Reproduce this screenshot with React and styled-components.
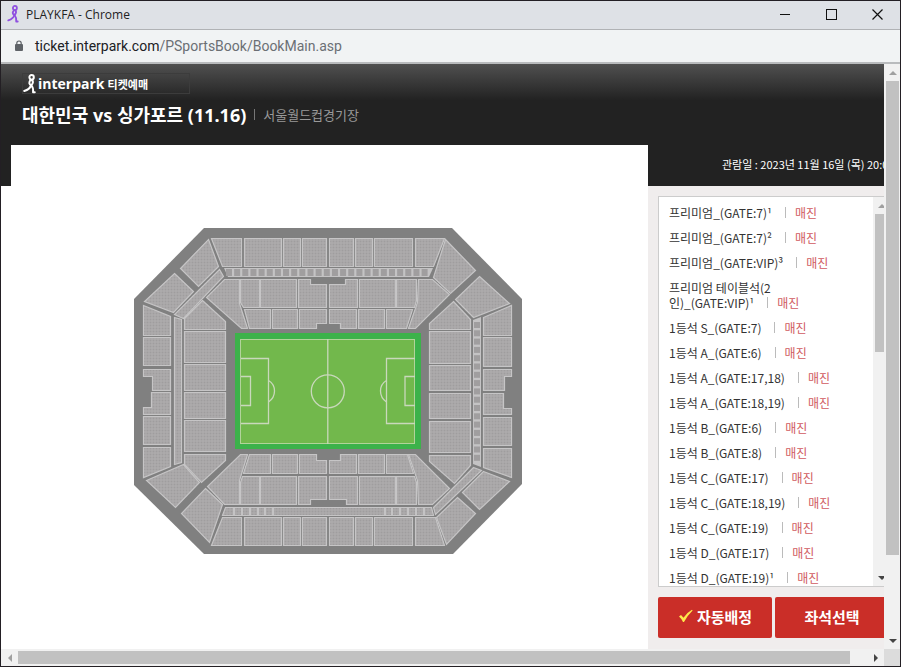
import React from 'react';
import styled, { createGlobalStyle } from 'styled-components';

const GlobalStyle = createGlobalStyle`
  * {
    box-sizing: border-box;
  }

  body {
    margin: 0;
    font-family: 'Noto Sans CJK KR', 'Noto Sans', sans-serif;
    font-size: 12px;
    color: #333;
  }
`;

const Window = styled.div`
  display: flex;
  flex-direction: column;
  height: 100vh;
  min-height: 480px;
  border: 1px solid #231f24;
  background: #fff;
`;

const TitleBar = styled.header`
  display: flex;
  align-items: center;
  flex: none;
  height: 29px;
  padding: 0 0 2px 6px;
  border-bottom: 1px solid #b0b2b5;
  background: #dee1e6;
  font-family: 'Open Sans', 'Noto Sans CJK KR', sans-serif;
  font-size: 12px;
  color: #222;
`;

const WindowTitle = styled.span`
  flex: 1;
  margin-left: 7px;
`;

const WindowButton = styled.button`
  display: flex;
  align-items: center;
  justify-content: center;
  width: 46px;
  height: 24px;
  padding: 0;
  border: none;
  background: transparent;
`;

const AddressBar = styled.div`
  display: flex;
  align-items: center;
  flex: none;
  gap: 11px;
  height: 34px;
  padding-left: 13px;
  border-bottom: 2px solid #b9bbbd;
  background: #f1f3f4;
`;

const Address = styled.span`
  font-family: Roboto, 'Open Sans', sans-serif;
  font-size: 14px;
  line-height: 20px;
  color: #202124;
`;

const AddressPath = styled.span`
  color: #6b6f74;
`;

const Content = styled.div`
  display: flex;
  flex: 1;
  min-height: 0;
`;

const Page = styled.main`
  display: flex;
  flex-direction: column;
  flex: 1;
  min-width: 0;
  overflow: hidden;
  background:
    linear-gradient(#505050, #222 36px) 0 0 / 100% 122px no-repeat,
    #fff;
`;

const PageHeader = styled.div`
  flex: none;
  height: 81px;
  padding: 9px 0 0 21px;
  color: #fff;
`;

const Brand = styled.a`
  display: flex;
  align-items: center;
  width: 168px;
  height: 21px;
  border: 1px solid #3c3c3c;
  font-weight: 700;
  color: #fff;
  text-decoration: none;
`;

const BrandName = styled.span`
  margin: 0 3px 0 2px;
  font-family: 'Open Sans', sans-serif;
  font-size: 14px;
`;

const BrandService = styled.span`
  font-size: 11px;
`;

const MatchLine = styled.div`
  display: flex;
  align-items: center;
  gap: 8px;
  height: 41px;
  white-space: nowrap;
`;

const MatchTitle = styled.h1`
  margin: 0;
  font-family: 'Noto Sans', 'Noto Sans CJK KR', sans-serif;
  font-size: 18px;
  line-height: 24px;
`;

const Venue = styled.span`
  font-size: 13px;
  color: #999;
`;

const Split = styled.i`
  display: inline-block;
  width: 1px;
  height: 11px;
  background: ${(props) => props.$color || '#bbb'};
`;

const Main = styled.div`
  display: flex;
  flex: 1;
  min-height: 0;
`;

const MapPanel = styled.section`
  display: flex;
  justify-content: center;
  align-items: flex-start;
  flex: 1;
  min-width: 0;
  margin-left: 10px;
  padding: 83px 3px 0 0;
  background: #fff;
`;

const Side = styled.aside`
  display: flex;
  flex-direction: column;
  flex: none;
  width: 236px;
  overflow: hidden;
`;

const DateLine = styled.div`
  flex: none;
  height: 41px;
  padding-left: 74px;
  font-size: 11px;
  line-height: 38px;
  color: #fff;
  white-space: nowrap;
`;

const Booking = styled.div`
  display: flex;
  flex-direction: column;
  flex: 1;
  gap: 10px;
  min-height: 0;
  width: 252px;
  padding: 10px 10px 11px;
  background: #f0eded;
`;

const ZoneBox = styled.div`
  display: flex;
  flex: 1;
  min-height: 0;
  border: 1px solid #ccc;
  background: #fff;
`;

const ZoneList = styled.ul`
  flex: 1;
  margin: 0;
  padding: 3px 34px 0 10px;
  overflow: hidden;
  list-style: none;
`;

const Zone = styled.li`
  padding: 5px 0;
  line-height: 15px;
`;

const ZoneLink = styled.a`
  font-size: 12px;
  color: #333;
  text-decoration: none;
`;

const ZoneStatus = styled.span`
  display: inline-flex;
  align-items: center;
  gap: 9px;
  height: 15px;
  margin-left: 13px;
  color: #d05a60;
  vertical-align: top;
`;

const Actions = styled.div`
  display: flex;
  flex: none;
  gap: 3px;
`;

const ActionButton = styled.button`
  display: flex;
  align-items: center;
  justify-content: center;
  gap: 4px;
  width: 114px;
  height: 41px;
  padding: 0 0 3px;
  border: none;
  border-radius: 2px;
  background: #ca2e28;
  font-family: inherit;
  font-size: 15px;
  font-weight: 700;
  color: #fff;
`;

const BottomBar = styled.div`
  display: flex;
  flex: none;
  height: 17px;
`;

const Corner = styled.div`
  width: 16px;
  background: #dcdcdc;
`;

const Scroller = styled.div`
  display: flex;
  flex: ${(props) => (props.$vertical ? 'none' : 1)};
  flex-direction: ${(props) => (props.$vertical ? 'column' : 'row')};
  width: ${(props) => (props.$vertical ? '16px' : 'auto')};
  background: #f1f1f1;
`;

const Arrow = styled.span`
  display: flex;
  align-items: center;
  justify-content: center;
  flex: none;
  width: 17px;
  height: 17px;
`;

const Track = styled.div`
  display: flex;
  flex: 1;
  flex-direction: inherit;
  min-height: 0;
  padding: ${(props) => (props.$vertical ? '0 1px 0 2px' : '2px 0')};
`;

const Thumb = styled.div`
  flex: none;
  ${(props) => (props.$vertical ? 'height' : 'width')}: ${(props) => props.$size};
  ${(props) => (props.$vertical ? 'width' : 'height')}: 13px;
  background: #c1c1c1;
`;

const arrows = {
  up: '4,10 12,10 8,6',
  down: '4,6 12,6 8,10',
  left: '10,4 10,12 6,8',
  right: '6,4 6,12 10,8',
};

const ArrowIcon = ({ to, color }) => (
  <Arrow>
    <svg width="16" height="16" aria-hidden="true">
      <polygon points={arrows[to]} fill={color} />
    </svg>
  </Arrow>
);

const ScrollBar = ({ vertical, size }) => (
  <Scroller $vertical={vertical}>
    <ArrowIcon to={vertical ? 'up' : 'left'} color="#a0a0a0" />
    <Track $vertical={vertical}>
      <Thumb $vertical={vertical} $size={size} />
    </Track>
    <ArrowIcon to={vertical ? 'down' : 'right'} color="#444" />
  </Scroller>
);

const Figure = ({ width, height, color }) => (
  <svg width={width} height={height} viewBox="0 0 12 19" fill="none" stroke={color} strokeWidth="1.9" strokeLinecap="round" strokeLinejoin="round" aria-hidden="true">
    <ellipse cx="8" cy="3.2" rx="2.1" ry="2.2" />
    <path d="M7.2 5.4 C5 8 5.6 10 7.6 10.6 C9.4 9 9.6 7.2 8.6 5.6" />
    <path d="M7.4 10.8 C6.8 13 5.2 14.8 1 16.2" />
    <path d="M7.8 10.8 C9.4 12.6 9.6 14.6 9.4 17.4 H11" />
  </svg>
);

const LockIcon = () => (
  <svg width="10" height="12" aria-hidden="true">
    <rect x="1" y="4" width="8" height="7" rx="1" fill="#5f6368" />
    <path d="M2.8 5 V3.2 a2.2 2.2 0 0 1 4.4 0 V5" fill="none" stroke="#5f6368" strokeWidth="1.2" />
  </svg>
);

const CheckIcon = () => (
  <svg width="15" height="14" aria-hidden="true">
    <path d="M1 7.5 L3 6 L5.5 8.8 Q9 3.5 14 0.8 L14.6 1.6 Q9.5 6.5 6 13 H5 Q3.5 9.5 1 7.5 Z" fill="#ffe94a" />
  </svg>
);

// stands, listed from the north side round to the south side
const stands = [
  // north, outer row
  '77,10 107,10 107,38 88,38',
  '110,10 147,10 147,38 110,38',
  '149,10 166,10 166,38 149,38',
  '168,10 192,10 192,38 168,38',
  '195,10 219,10 219,38 195,38',
  '221,10 238,10 238,38 221,38',
  '240,10 278,10 278,38 240,38',
  '281,10 310,10 299,38 281,38',
  // north, inner rows
  '90,51 105,51 105,75 113,100 107,100 72,69',
  '106,51 125,51 125,79 109,79 106,74',
  '126,51 162,51 162,79 126,79',
  '164,51 176,51 176,56 192,56 192,79 164,79',
  '195,56 211,56 211,51 223,51 223,79 195,79',
  '225,51 261,51 261,79 225,79',
  '262,51 282,51 282,72 280,79 262,79',
  '284,51 298,51 315,66 281,100 274,100 283,74',
  '110,81 136,81 136,100 115,100',
  '138,81 163,81 163,100 138,100',
  '165,81 192,81 192,95 182,95 182,100 165,100',
  '195,81 222,81 222,100 206,100 206,95 195,95',
  '224,81 250,81 250,100 224,100',
  '252,81 278,81 272,100 252,100',
  // north-west corner
  '74,11 84,38 64,58 46,40',
  '40,45 59,63 39,84 10,73',
  '85,41 89,48 49,90 40,86',
  '68,72 91,93 91,101 50,101 50,90',
  // west
  '9,77 36,88 36,107 9,107',
  '9,109 36,109 36,137 9,137',
  '9,141 36,141 36,162 18,162 18,148 9,148',
  '17,164 36,164 36,186 9,186 9,179 17,179',
  '9,188 36,188 36,216 9,216',
  '9,219 36,219 36,238 9,249',
  '40,89 47,91 47,234 40,236',
  '50,103 91,103 91,134 50,134',
  '50,136 91,136 91,162 50,162',
  '50,164 91,164 91,190 50,190',
  '50,192 91,192 91,223 50,223',
  // south-west corner
  '50,226 91,226 91,232 67,254 50,236',
  '12,252 49,236 65,254 41,279',
  '71,260 88,276 75,314 47,285',
  // south, inner rows
  '106,226 113,226 105,252 105,276 90,276 73,258',
  '115,226 136,226 136,245 109,245',
  '138,226 163,226 163,245 138,245',
  '165,226 182,226 182,232 192,232 192,245 165,245',
  '195,232 206,232 206,226 222,226 222,245 195,245',
  '224,226 250,226 250,245 224,245',
  '252,226 273,226 279,245 252,245',
  '108,248 125,248 125,276 106,276 106,254',
  '126,248 162,248 162,276 126,276',
  '164,248 192,248 192,271 176,271 176,276 164,276',
  '195,248 223,248 223,276 212,276 212,271 195,271',
  '225,248 261,248 261,276 225,276',
  '262,248 280,248 282,254 282,276 262,276',
  '274,226 281,226 315,260 298,276 284,276 283,252',
  // south, outer row
  '91,279 297,279 299,287 88,287',
  '88,289 107,289 107,317 77,317',
  '110,289 147,289 147,317 110,317',
  '149,289 166,289 166,317 149,317',
  '168,289 192,289 192,317 168,317',
  '195,289 219,289 219,317 195,317',
  '221,289 238,289 238,317 221,317',
  '240,289 278,289 278,317 240,317',
  '281,289 301,289 310,317 281,317',
  // north-east corner
  '311,11 341,42 316,65 299,49',
  '345,48 375,75 339,89 321,71',
  '319,73 336,91 336,101 295,101 295,95',
  // east
  '295,103 336,103 336,135 295,135',
  '295,137 336,137 336,162 295,162',
  '295,165 336,165 336,190 295,190',
  '295,193 336,193 336,224 295,224',
  '349,89 377,77 377,107 349,107',
  '349,109 377,109 377,138 349,138',
  '349,141 377,141 377,148 370,148 370,162 349,162',
  '349,165 369,165 369,180 377,180 377,186 349,186',
  '349,189 377,189 377,217 349,217',
  '349,220 377,220 377,249 349,239',
  // south-east corner
  '295,227 336,227 336,237 320,255 295,233',
  '339,239 347,242 301,286 299,279',
  '349,243 375,253 345,281 328,264',
  '323,269 341,285 312,316 302,289',
];

const range = (count) => Array.from({ length: count }, (_, i) => i);

const StadiumMap = () => (
  <svg width="388" height="326" viewBox="0 0 388 326" role="img" aria-label="서울월드컵경기장">
    <defs>
      <pattern id="seats" width="3" height="3" patternUnits="userSpaceOnUse">
        <rect width="3" height="3" fill="#b0aeaf" />
        <rect width="2" height="2" fill="#9f9d9e" />
      </pattern>
    </defs>
    <polygon points="70,0 318,0 388,71 388,256 319,326 70,326 0,257 0,71" fill="#808080" />
    <g transform="translate(.5 .5)" fill="url(#seats)" stroke="#c6c5c6" strokeWidth="1.2">
      {stands.map((points) => (
        <polygon key={points} points={points} />
      ))}
    </g>
    <polygon points="90,40 299,40 295,49 94,49" fill="#c4c3c4" />
    <polygon points="339,92 347,89 347,239 339,236" fill="#c4c3c4" />
    <g fill="#a09e9f">
      {range(25).map((i) => (
        <rect key={i} x={92 + i * 8.15} y="41" width="6" height="7" />
      ))}
      {range(17).map((i) => (
        <rect key={i} x="340" y={94 + i * 8.3} width="6" height="6" />
      ))}
    </g>
    <g fill="none" stroke="#c4c3c4" strokeWidth="2">
      {[100, 108, 116, 124, 131, 139, 251, 258, 266, 274, 282, 290].map((x) => (
        <path key={x} d={`M${x} 280 V287`} />
      ))}
    </g>
    <rect x="101" y="105" width="186" height="116" fill="#3cb24a" />
    <rect x="106.5" y="111.5" width="174" height="104" fill="#72b84c" stroke="#b2d39a" />
    <g fill="none" stroke="#c9d8bc" strokeWidth="1.3">
      <path d="M193.8 111 V216" />
      <circle cx="193.8" cy="163.3" r="16.5" />
      <path d="M107 130.5 H134.5 V195.5 H107 M107 148.5 H116.5 V177.5 H107" />
      <path d="M134.5 152.5 Q140.5 156 140.5 163 T134.5 174" />
      <path d="M281 130.5 H252.5 V195.5 H281 M281 148.5 H271 V177.5 H281" />
      <path d="M252.5 152.5 Q246.5 156 246.5 163 T252.5 174" />
    </g>
  </svg>
);

const zones = [
  '프리미엄_(GATE:7)¹',
  '프리미엄_(GATE:7)²',
  '프리미엄_(GATE:VIP)³',
  '프리미엄 테이블석(2인)_(GATE:VIP)¹',
  '1등석 S_(GATE:7)',
  '1등석 A_(GATE:6)',
  '1등석 A_(GATE:17,18)',
  '1등석 A_(GATE:18,19)',
  '1등석 B_(GATE:6)',
  '1등석 B_(GATE:8)',
  '1등석 C_(GATE:17)',
  '1등석 C_(GATE:18,19)',
  '1등석 C_(GATE:19)',
  '1등석 D_(GATE:17)',
  '1등석 D_(GATE:19)¹',
];

const App = () => {
  return (
    <>
      <GlobalStyle />
      <Window>
        <TitleBar>
          <Figure width="12" height="18" color="#9050e0" />
          <WindowTitle>PLAYKFA - Chrome</WindowTitle>
          <WindowButton aria-label="Minimize">
            <svg width="11" height="11"><path d="M0 5.5 H10" stroke="#111" /></svg>
          </WindowButton>
          <WindowButton aria-label="Maximize">
            <svg width="11" height="11"><rect x=".5" y=".5" width="10" height="10" fill="none" stroke="#111" /></svg>
          </WindowButton>
          <WindowButton aria-label="Close">
            <svg width="11" height="11"><path d="M.5 .5 L10.5 10.5 M10.5 .5 L.5 10.5" stroke="#111" strokeWidth="1.2" /></svg>
          </WindowButton>
        </TitleBar>
        <AddressBar>
          <LockIcon />
          <Address>
            ticket.interpark.com<AddressPath>/PSportsBook/BookMain.asp</AddressPath>
          </Address>
        </AddressBar>
        <Content>
          <Page>
            <PageHeader>
              <Brand href="#">
                <Figure width="13" height="20" color="#fff" />
                <BrandName>interpark</BrandName>
                <BrandService>티켓예매</BrandService>
              </Brand>
              <MatchLine>
                <MatchTitle>대한민국 vs 싱가포르 (11.16)</MatchTitle>
                <Split $color="#777" />
                <Venue>서울월드컵경기장</Venue>
              </MatchLine>
            </PageHeader>
            <Main>
              <MapPanel>
                <StadiumMap />
              </MapPanel>
              <Side>
                <DateLine>관람일 : 2023년 11월 16일 (목) 20:00</DateLine>
                <Booking>
                  <ZoneBox>
                    <ZoneList>
                      {zones.map((zone) => (
                        <Zone key={zone}>
                          <ZoneLink href="#">{zone}</ZoneLink>
                          <ZoneStatus>
                            <Split />
                            매진
                          </ZoneStatus>
                        </Zone>
                      ))}
                    </ZoneList>
                    <ScrollBar vertical size="39%" />
                  </ZoneBox>
                  <Actions>
                    <ActionButton>
                      <CheckIcon />
                      자동배정
                    </ActionButton>
                    <ActionButton>좌석선택</ActionButton>
                  </Actions>
                </Booking>
              </Side>
            </Main>
          </Page>
          <ScrollBar vertical size="86%" />
        </Content>
        <BottomBar>
          <ScrollBar size="98%" />
          <Corner />
        </BottomBar>
      </Window>
    </>
  );
};

export default App;
